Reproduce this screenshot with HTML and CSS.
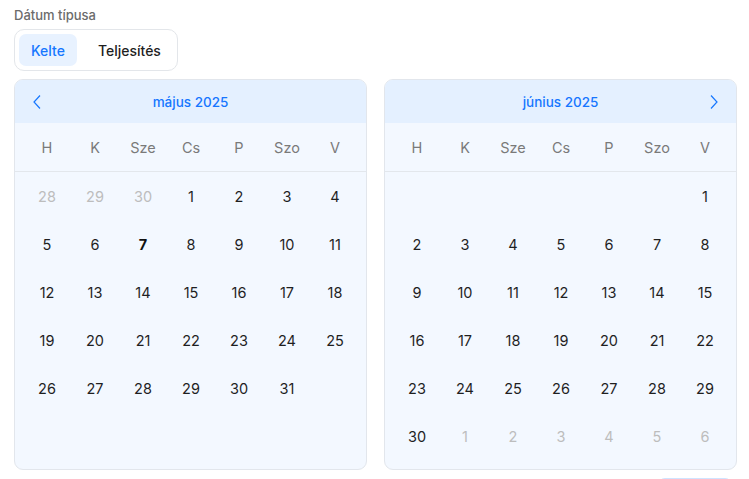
FILE: index.html
```html
<!DOCTYPE html>
<html lang="hu">
<head>
<meta charset="utf-8">
<link rel="stylesheet" href="styles.css">
</head>
<body>
<div class="page">
  <div class="label">Dátum típusa</div>
  <div class="seg">
    <div class="seg-item active">Kelte</div>
    <div class="seg-item">Teljesítés</div>
  </div>
  <div class="cals">
    <div class="cal">
      <div class="cal-head">
        <span class="nav left"><svg width="10" height="16" viewBox="0 0 10 16"><path d="M8 1.5 L2 8 L8 14.5" fill="none" stroke="#1677ff" stroke-width="1.2"/></svg></span>
        <span class="title">május 2025</span>
        <span class="nav"></span>
      </div>
      <div class="week">
        <span>H</span><span>K</span><span>Sze</span><span>Cs</span><span>P</span><span>Szo</span><span>V</span>
      </div>
      <div class="days">
        <span class="muted">28</span><span class="muted">29</span><span class="muted">30</span><span>1</span><span>2</span><span>3</span><span>4</span>
        <span>5</span><span>6</span><span class="today">7</span><span>8</span><span>9</span><span>10</span><span>11</span>
        <span>12</span><span>13</span><span>14</span><span>15</span><span>16</span><span>17</span><span>18</span>
        <span>19</span><span>20</span><span>21</span><span>22</span><span>23</span><span>24</span><span>25</span>
        <span>26</span><span>27</span><span>28</span><span>29</span><span>30</span><span>31</span><span></span>
        <span></span><span></span><span></span><span></span><span></span><span></span><span></span>
      </div>
    </div>
    <div class="cal">
      <div class="cal-head">
        <span class="nav"></span>
        <span class="title">június 2025</span>
        <span class="nav right"><svg width="10" height="16" viewBox="0 0 10 16"><path d="M2 1.5 L8 8 L2 14.5" fill="none" stroke="#1677ff" stroke-width="1.2"/></svg></span>
      </div>
      <div class="week">
        <span>H</span><span>K</span><span>Sze</span><span>Cs</span><span>P</span><span>Szo</span><span>V</span>
      </div>
      <div class="days">
        <span></span><span></span><span></span><span></span><span></span><span></span><span>1</span>
        <span>2</span><span>3</span><span>4</span><span>5</span><span>6</span><span>7</span><span>8</span>
        <span>9</span><span>10</span><span>11</span><span>12</span><span>13</span><span>14</span><span>15</span>
        <span>16</span><span>17</span><span>18</span><span>19</span><span>20</span><span>21</span><span>22</span>
        <span>23</span><span>24</span><span>25</span><span>26</span><span>27</span><span>28</span><span>29</span>
        <span>30</span><span class="muted">1</span><span class="muted">2</span><span class="muted">3</span><span class="muted">4</span><span class="muted">5</span><span class="muted">6</span>
      </div>
    </div>
  </div>
  <div class="actions"><div class="btn"></div></div>
</div>
</body>
</html>
```
FILE: styles.css
```css
* { box-sizing: border-box; }
html, body { margin: 0; padding: 0; background: #fff; }
body { font-family: Inter, "Noto Sans", "Liberation Sans", sans-serif; color: #1f1f1f; overflow: hidden; height: 479px; }
.page { padding: 5px 12px 0 14px; width: 749px; }
.label { font-size: 13px; font-weight: 500; color: #6b6b6b; line-height: 20px; height: 24px; }
.seg { display: inline-flex; gap: 9px; border: 1px solid #e3e6ea; border-radius: 10px; padding: 4px; height: 42px; align-items: stretch; }
.seg-item { font-size: 14px; font-weight: 500; padding: 0 12px; display: flex; align-items: center; border-radius: 7px; color: #1f1f1f; }
.seg-item.active { background: #e8f2ff; color: #1677ff; }
.cals { display: flex; gap: 17px; margin-top: 8px; }
.cal { width: 354px; height: 391px; border: 1px solid #e2e6ec; border-radius: 9px; background: #f3f8ff; overflow: hidden; }
.cal-head { height: 43px; background: #e4f0ff; display: flex; align-items: center; justify-content: space-between; padding: 0 14px; }
.title { font-size: 13.5px; font-weight: 500; color: #1677ff; }
.nav { width: 16px; display: flex; align-items: center; justify-content: center; }
.nav svg { display: block; }
.week { display: grid; grid-template-columns: repeat(7, 48px); padding: 0 8px; height: 49px; align-items: center; border-bottom: 1px solid #e3e7ec; }
.week span { text-align: center; font-size: 14.5px; color: #7a7a7a; }
.days { display: grid; grid-template-columns: repeat(7, 48px); grid-auto-rows: 48px; padding: 0 8px; }
.days span { display: flex; align-items: center; justify-content: center; font-size: 14.5px; color: #1f1f1f; }
.days span.muted { color: #bdbdbd; }
.days span.today { font-weight: 700; color: #111; }
.actions { display: flex; justify-content: flex-end; padding-right: 4px; margin-top: 8px; }
.btn { width: 76px; height: 30px; border-radius: 8px; background: #e8f2ff; border: 1px solid #cfe3ff; }
```
